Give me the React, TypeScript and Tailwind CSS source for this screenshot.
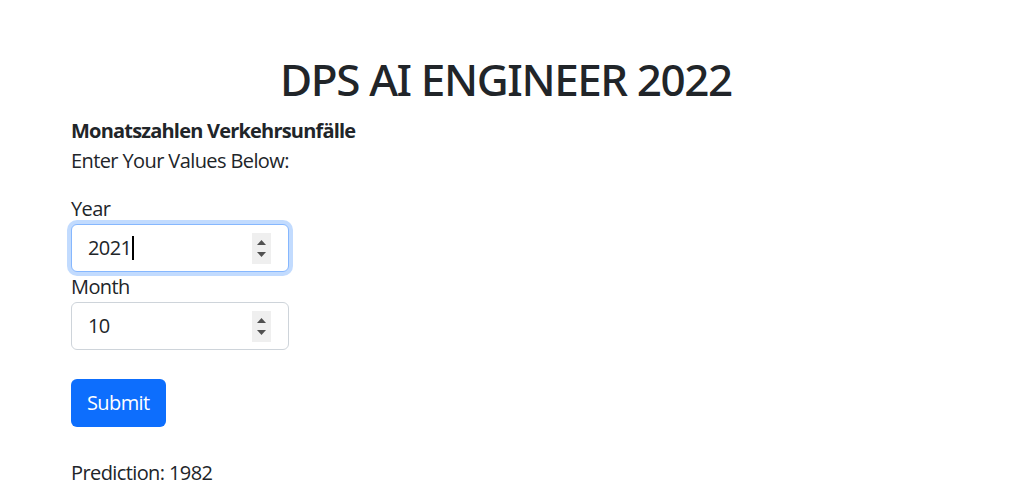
function Spinner() {
  return (
    <div className="flex flex-col items-center justify-center gap-[7px] w-[19px] h-[31px] bg-[#efefef]">
      <svg width="9" height="5" viewBox="0 0 9 5">
        <path d="M0 5 L4.5 0 L9 5 Z" fill="#505050" />
      </svg>
      <svg width="9" height="5" viewBox="0 0 9 5">
        <path d="M0 0 L4.5 5 L9 0 Z" fill="#505050" />
      </svg>
    </div>
  );
}

function NumberField({ value, focused }: { value: string; focused?: boolean }) {
  return (
    <div
      className={
        focused
          ? "flex items-center justify-between w-[218px] h-[48px] pl-4 pr-[17px] rounded-[6px] border border-[#86b7fe] bg-white shadow-[0_0_0_4px_rgba(13,110,253,0.25)]"
          : "flex items-center justify-between w-[218px] h-[48px] pl-4 pr-[17px] rounded-[6px] border border-[#ced4da] bg-white"
      }
    >
      <div className="flex items-center text-[20px] leading-[30px] text-[#212529]">
        <span>{value}</span>
        {focused && <span className="w-[2px] h-[24px] bg-black ml-px" />}
      </div>
      <Spinner />
    </div>
  );
}

export default function App() {
  return (
    <div className="min-h-[488px] bg-white text-[#212529] font-['Open_Sans',sans-serif]">
      <h1 className="pt-[51px] text-center text-[44px] leading-[56px] font-['Noto_Sans',sans-serif] font-medium tracking-[-1.4px]">
        DPS AI ENGINEER 2022
      </h1>

      <div className="pl-[71px] pt-[9px] text-[20px] leading-[30px] tracking-[-0.6px]">
        <p className="font-bold tracking-[-0.8px]">Monatszahlen Verkehrsunfälle</p>
        <p>Enter Your Values Below:</p>

        <div className="mt-[18px]">
          <p>Year</p>
          <NumberField value="2021" focused />
          <p>Month</p>
          <NumberField value="10" />
        </div>

        <button className="mt-[29px] h-[48px] px-4 rounded-[6px] bg-[#0d6efd] text-white text-[20px] leading-[30px]">
          Submit
        </button>

        <p className="mt-[31px]">Prediction: 1982</p>
      </div>
    </div>
  );
}
